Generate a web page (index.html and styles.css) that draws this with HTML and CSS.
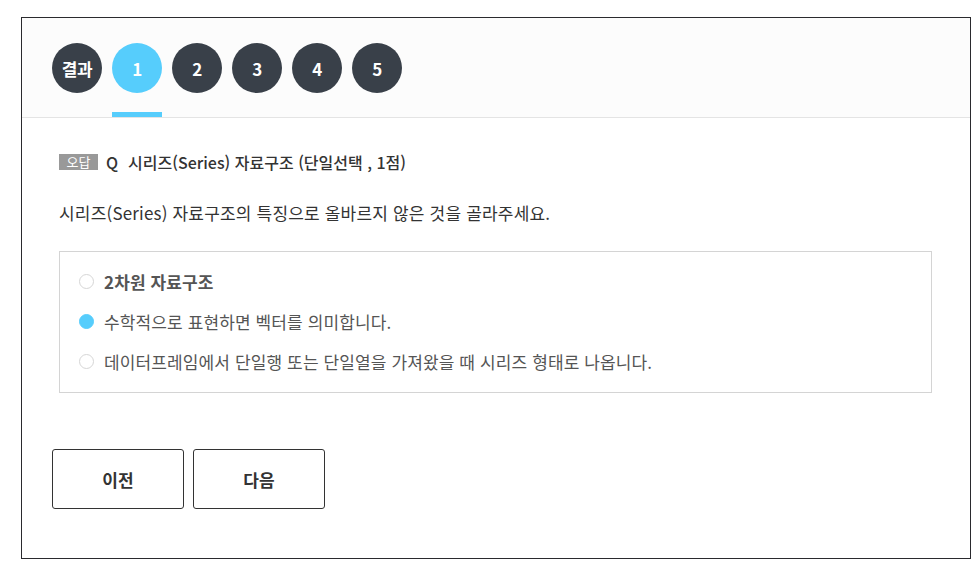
FILE: index.html
```html
<!DOCTYPE html>
<html lang="ko">
<head>
<meta charset="utf-8">
<link rel="stylesheet" href="styles.css">
</head>
<body>
<div class="frame">
  <div class="quiz">
    <div class="tabs">
      <div class="tab">결과</div>
      <div class="tab active">1</div>
      <div class="tab">2</div>
      <div class="tab">3</div>
      <div class="tab">4</div>
      <div class="tab">5</div>
    </div>
    <div class="content">
      <div class="question">
        <div class="title"><span class="badge">오답</span><span class="q">Q</span><span>시리즈(Series) 자료구조 (단일선택 , 1점)</span></div>
        <p class="desc">시리즈(Series) 자료구조의 특징으로 올바르지 않은 것을 골라주세요.</p>
        <div class="options">
          <div class="option correct"><span class="radio"></span><span>2차원 자료구조</span></div>
          <div class="option"><span class="radio checked"></span><span>수학적으로 표현하면 벡터를 의미합니다.</span></div>
          <div class="option"><span class="radio"></span><span>데이터프레임에서 단일행 또는 단일열을 가져왔을 때 시리즈 형태로 나옵니다.</span></div>
        </div>
      </div>
      <div class="buttons">
        <button class="btn">이전</button>
        <button class="btn">다음</button>
      </div>
    </div>
  </div>
</div>
</body>
</html>
```
FILE: styles.css
```css
* { box-sizing: border-box; }
html, body { margin: 0; padding: 0; background: #fff; }
body { font-family: "Noto Sans CJK KR", "Noto Sans", sans-serif; color: #333; }
.frame { padding: 17px 0 0 21px; }
.quiz {
  width: 950px;
  height: 542px;
  border: 1px solid #2a2a2e;
  background: #fff;
}
.tabs {
  display: flex;
  gap: 10px;
  height: 100px;
  padding: 25px 0 0 30px;
  background: #fcfcfc;
  border-bottom: 1px solid #e4e4e4;
}
.tab {
  position: relative;
  width: 50px;
  height: 50px;
  border-radius: 50%;
  background: #394049;
  color: #fff;
  font-size: 17px;
  font-weight: 700;
  display: flex;
  align-items: center;
  justify-content: center;
  letter-spacing: -0.5px;
}
.tab.active { background: #56cdfc; }
.tab.active::after {
  content: "";
  position: absolute;
  left: 0;
  right: 0;
  top: 69px;
  height: 5px;
  background: #56cdfc;
}
.content { padding: 0 0 0 30px; }
.question { padding: 32px 38px 0 7px; }
.title {
  display: flex;
  align-items: center;
  font-size: 16px;
  font-weight: 500;
  color: #333;
  height: 24px;
}
.badge {
  background: #999;
  color: #fff;
  font-size: 13px;
  font-weight: 400;
  width: 39px;
  height: 16px;
  line-height: 16px;
  text-align: center;
  margin-right: 8px;
}
.q { margin-right: 10px; }
.desc {
  margin: 27px 0 0;
  font-size: 17px;
  line-height: 24px;
  color: #333;
  letter-spacing: 0.18px;
}
.options {
  margin-top: 26px;
  border: 1px solid #d4d4d4;
  height: 142px;
  padding: 9px 0 0 19px;
}
.option {
  display: flex;
  align-items: center;
  height: 40px;
  font-size: 17px;
  color: #555;
  letter-spacing: 0.12px;
}
.option.correct { font-weight: 700; }
.radio {
  width: 15px;
  height: 15px;
  border-radius: 50%;
  border: 1px solid #d6d6d6;
  background: #fff;
  margin-right: 10px;
  flex: none;
}
.radio.checked { background: #56cdfc; border-color: #56cdfc; }
.buttons {
  display: flex;
  gap: 9px;
  margin-top: 56px;
}
.btn {
  width: 132px;
  height: 60px;
  border: 1px solid #333;
  border-radius: 3px;
  background: #fff;
  font-family: inherit;
  font-size: 17px;
  font-weight: 700;
  color: #333;
}
```
